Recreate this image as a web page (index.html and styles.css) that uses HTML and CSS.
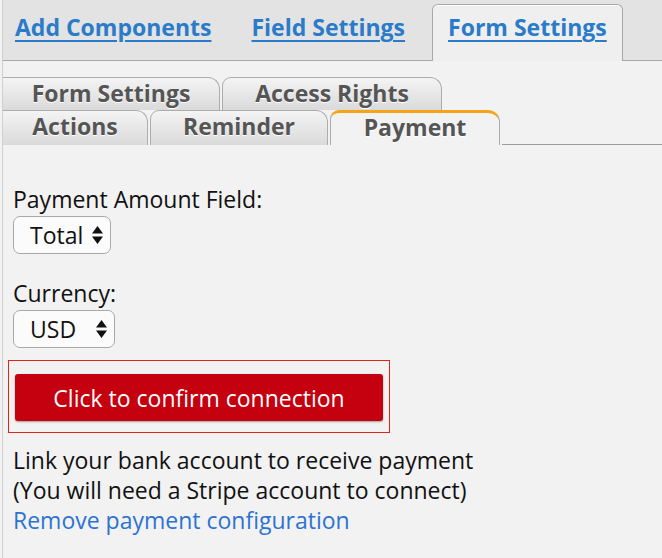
FILE: index.html
```html
<!DOCTYPE html>
<html lang="en">
<head>
    <meta charset="UTF-8">
    <title>Form Settings - Payment</title>
    <link rel="stylesheet" href="styles.css">
</head>
<body>
    <div class="frame">
        <!-- main editor tabs -->
        <div class="top-tabs">
            <a href="#" class="top-tab">Add Components</a>
            <a href="#" class="top-tab">Field Settings</a>
            <a href="#" class="top-tab active">Form Settings</a>
        </div>

        <div class="panel">
            <!-- form settings sub tabs, two rows -->
            <div class="sub-tabs">
                <div class="tab-row row-back">
                    <span class="sub-tab tab-form">Form Settings</span>
                    <span class="sub-tab tab-access">Access Rights</span>
                </div>
                <div class="tab-row row-front">
                    <span class="sub-tab tab-actions">Actions</span>
                    <span class="sub-tab tab-reminder">Reminder</span>
                    <span class="sub-tab tab-payment current">Payment</span>
                    <span class="tab-fill"></span>
                </div>
            </div>

            <div class="payment">
                <label class="field-label" for="amount">Payment Amount Field:</label>
                <div class="select-wrap">
                    <select id="amount" class="select-box select-total">
                        <option>Total</option>
                    </select>
                    <svg class="select-arrows" width="11" height="18" viewBox="0 0 11 18">
                        <path d="M5.5 0 L11 7.5 L0 7.5 Z M0 10.5 L11 10.5 L5.5 18 Z" fill="#111"/>
                    </svg>
                </div>

                <label class="field-label label-currency" for="currency">Currency:</label>
                <div class="select-wrap">
                    <select id="currency" class="select-box select-usd">
                        <option>USD</option>
                    </select>
                    <svg class="select-arrows" width="11" height="18" viewBox="0 0 11 18">
                        <path d="M5.5 0 L11 7.5 L0 7.5 Z M0 10.5 L11 10.5 L5.5 18 Z" fill="#111"/>
                    </svg>
                </div>

                <div class="connect-box">
                    <button type="button" class="connect-button">Click to confirm connection</button>
                </div>

                <p class="info">
                    Link your bank account to receive payment<br>
                    (You will need a Stripe account to connect)<br>
                    <a href="#" class="remove-link">Remove payment configuration</a>
                </p>
            </div>
        </div>
    </div>
</body>
</html>
```

FILE: styles.css
```css
body {
    margin: 0;
    font-family: 'Open Sans', 'DejaVu Sans', sans-serif;
    background-color: #f2f2f2;
    color: #111;
}
.frame {
    margin-left: 2px;
    border-left: 1px solid #d0d0d0;
    min-height: 558px;
}

/* top tabs */
.top-tabs {
    display: flex;
    align-items: flex-end;
    gap: 8px;
    height: 60px;
    background-color: #e3e3e3;
    border-bottom: 1px solid #a8a8a8;
}
.top-tab {
    display: block;
    box-sizing: border-box;
    height: 49px;
    padding: 1px 16px 0 16px;
    font-size: 23px;
    font-weight: 700;
    line-height: 31px;
    color: #2a7bc9;
    text-decoration: underline;
    text-underline-offset: 4px;
    text-decoration-thickness: 2px;
}
.top-tab:first-child {
    padding-left: 12px;
}
.top-tab.active {
    position: relative;
    top: 1px;
    height: 57px;
    margin-left: 3px;
    padding: 7px 15px 0 15px;
    background-color: #efefef;
    border: 1px solid #a8a8a8;
    border-bottom: none;
    border-radius: 6px 6px 0 0;
    box-shadow: inset 0 1px 0 #fff;
}

/* sub tabs */
.sub-tabs {
    padding-top: 16px;
}
.tab-row {
    display: flex;
    gap: 2px;
}
.sub-tab {
    display: block;
    box-sizing: border-box;
    font-size: 23px;
    font-weight: 700;
    line-height: 30px;
    color: #555;
    text-align: center;
    background: linear-gradient(#f4f4f4, #dadada);
    border: 1px solid #acacac;
    border-bottom: none;
    border-radius: 9px 12px 0 0;
    text-shadow: 0 1px 0 #fff;
}
.row-back .sub-tab {
    height: 33px;
}
.row-front .sub-tab {
    height: 35px;
}
.sub-tab:first-child {
    border-left: none;
    border-top-left-radius: 0;
}
.tab-form {
    width: 217px;
}
.tab-access {
    width: 220px;
}
.tab-actions {
    width: 145px;
}
.tab-reminder {
    width: 178px;
}
.tab-payment {
    width: 170px;
}
.sub-tab.current {
    background: #f2f2f2;
    border-top: 3px solid #f5a417;
    line-height: 28px;
}
.tab-fill {
    flex: 1;
    border-bottom: 1px solid #9c9c9c;
}

/* payment settings */
.payment {
    padding: 40px 0 0 10px;
}
.field-label {
    display: block;
    font-size: 23px;
    line-height: 28px;
}
.label-currency {
    margin-top: 25px;
}
.select-wrap {
    position: relative;
    width: max-content;
    margin-top: 3px;
}
.select-box {
    display: block;
    appearance: none;
    -webkit-appearance: none;
    height: 38px;
    padding: 0 0 0 16px;
    font-family: 'Open Sans', 'DejaVu Sans', sans-serif;
    font-size: 23px;
    color: #111;
    background-color: #fbfbfb;
    border: 1px solid #a9a9a9;
    border-radius: 7px;
}
.select-total {
    width: 98px;
}
.select-usd {
    width: 102px;
}
.select-arrows {
    position: absolute;
    right: 8px;
    top: 10px;
    pointer-events: none;
}
.connect-box {
    width: 368px;
    margin: 12px 0 0 -5px;
    padding: 13px 6px 11px 6px;
    border: 1px solid #e2231a;
}
.connect-button {
    display: block;
    width: 368px;
    height: 47px;
    font-family: 'Open Sans', 'DejaVu Sans', sans-serif;
    font-size: 23px;
    color: #fff;
    background-color: #c5000f;
    border: none;
    border-radius: 3px;
    box-shadow: 0 1px 2px rgba(0, 0, 0, 0.35);
}
.info {
    margin: 12px 0 0 0;
    font-size: 23px;
    line-height: 30px;
}
.remove-link {
    color: #2d73d2;
    text-decoration: none;
}
```
